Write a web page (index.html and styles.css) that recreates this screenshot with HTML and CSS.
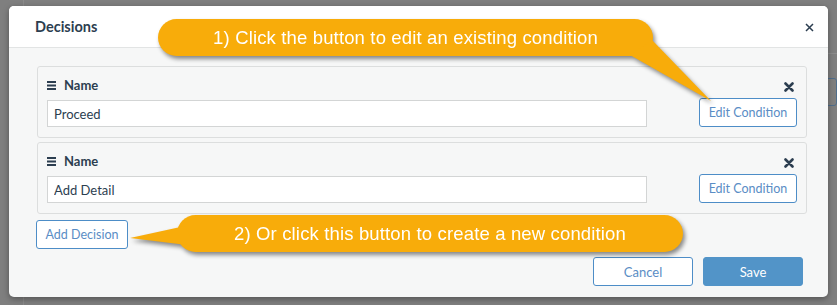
FILE: index.html
```html
<!DOCTYPE html>
<html lang="en">
<head>
<meta charset="utf-8">
<title>Decisions</title>
<link rel="stylesheet" href="styles.css">
</head>
<body>
<div class="page">
  <aside class="sidebar"></aside>
  <main class="main">
    <div class="topbar"></div>
    <div class="toolbar"><span class="ghost-btn">Save</span></div>
  </main>
</div>

<div class="modal">
  <header class="modal-header">
    <h2 class="modal-title">Decisions</h2>
    <button class="close" aria-label="Close">
      <svg width="9" height="9" viewBox="0 0 9 9"><path d="M1 1L8 8M8 1L1 8" stroke="#2c3e50" stroke-width="1.5" fill="none"/></svg>
    </button>
  </header>
  <div class="modal-body">
    <div class="decision">
      <div class="decision-main">
        <div class="decision-label">
          <svg class="grip" width="9" height="9" viewBox="0 0 9 9"><rect x="0" y="0" width="9" height="2" fill="#2c3e50"/><rect x="0" y="3.5" width="9" height="2" fill="#2c3e50"/><rect x="0" y="7" width="9" height="2" fill="#2c3e50"/></svg>
          <span>Name</span>
        </div>
        <input class="decision-input" type="text" value="Proceed">
      </div>
      <div class="decision-side">
        <span class="remove"><svg width="10" height="10" viewBox="0 0 10 10"><path d="M1.5 1.5L8.5 8.5M8.5 1.5L1.5 8.5" stroke="#2c3e50" stroke-width="2.6" stroke-linecap="round" fill="none"/></svg></span>
        <button class="btn btn-outline btn-edit">Edit Condition</button>
      </div>
    </div>
    <div class="decision">
      <div class="decision-main">
        <div class="decision-label">
          <svg class="grip" width="9" height="9" viewBox="0 0 9 9"><rect x="0" y="0" width="9" height="2" fill="#2c3e50"/><rect x="0" y="3.5" width="9" height="2" fill="#2c3e50"/><rect x="0" y="7" width="9" height="2" fill="#2c3e50"/></svg>
          <span>Name</span>
        </div>
        <input class="decision-input" type="text" value="Add Detail">
      </div>
      <div class="decision-side">
        <span class="remove"><svg width="10" height="10" viewBox="0 0 10 10"><path d="M1.5 1.5L8.5 8.5M8.5 1.5L1.5 8.5" stroke="#2c3e50" stroke-width="2.6" stroke-linecap="round" fill="none"/></svg></span>
        <button class="btn btn-outline btn-edit">Edit Condition</button>
      </div>
    </div>
    <button class="btn btn-outline btn-add">Add Decision</button>
    <div class="modal-footer">
      <button class="btn btn-outline btn-wide">Cancel</button>
      <button class="btn btn-primary btn-wide">Save</button>
    </div>
  </div>
</div>

<div class="callout callout-1">
  <svg class="tail" width="1" height="1"><polygon points="472,36 494,21 553,82" fill="#f8ac0a"/></svg>
  <span class="callout-text">1) Click the button to edit an existing condition</span>
</div>
<div class="callout callout-2">
  <svg class="tail" width="1" height="1"><polygon points="-47,23 8,11 18,31" fill="#f8ac0a"/></svg>
  <span class="callout-text">2) Or click this button to create a new condition</span>
</div>
</body>
</html>
```

FILE: styles.css
```css
* { box-sizing: border-box; }

html, body {
  margin: 0;
  width: 837px;
  height: 305px;
  overflow: hidden;
}

body {
  background: #7f7f7f;
  font-family: Lato, "Open Sans", sans-serif;
  position: relative;
}

/* dimmed page behind the dialog */
.page {
  display: flex;
  height: 305px;
}
.sidebar {
  width: 58px;
  border-right: 1px solid #8a8a8a;
}
.main {
  flex: 1;
}
.topbar {
  height: 54px;
  border-bottom: 1px solid #8c8c8c;
}
.toolbar {
  padding: 24px 0 0 760px;
  white-space: nowrap;
}
.ghost-btn {
  display: inline-block;
  height: 28px;
  line-height: 26px;
  padding: 0 12px;
  border: 1px solid #4f6e8c;
  border-radius: 3px;
  color: #5b6d80;
  font-size: 13px;
}

/* dialog */
.modal {
  position: absolute;
  left: 9px;
  top: 6px;
  width: 819px;
  height: 291px;
  background: #f6f7f7;
  border-radius: 5px;
  overflow: hidden;
  box-shadow: 0 2px 6px rgba(0, 0, 0, 0.35);
}

.modal-header {
  height: 42px;
  background: #fff;
  border-bottom: 1px solid #e2e4e4;
  display: flex;
  align-items: center;
  justify-content: space-between;
  padding: 0 14px 0 26px;
}
.modal-title {
  margin: 0;
  font-size: 14.5px;
  font-weight: 700;
  color: #2c3e50;
}
.close {
  border: 0;
  background: none;
  padding: 0;
  width: 9px;
  height: 9px;
  display: flex;
  margin-top: 2px;
}

.modal-body {
  padding: 18px 21px 0 28px;
}

.decision {
  display: flex;
  justify-content: space-between;
  border: 1px solid #dcdede;
  border-radius: 3px;
  padding: 10px 9px;
  background: #f6f7f7;
}
.decision + .decision {
  margin-top: 4px;
}
.decision-main {
  width: 600px;
}
.decision-label {
  display: flex;
  align-items: center;
  gap: 8px;
  height: 16px;
  font-size: 13px;
  font-weight: 700;
  color: #2c3e50;
}
.decision-input {
  display: block;
  width: 600px;
  height: 27px;
  margin: 7px 0 0;
  border: 1px solid #d3d5d5;
  background: #fff;
  padding: 0 6px;
  font-family: Lato, "Open Sans", sans-serif;
  font-size: 13px;
  color: #2c3e50;
  outline: none;
}

.decision-side {
  display: flex;
  flex-direction: column;
  align-items: flex-end;
  justify-content: space-between;
}
.remove {
  display: flex;
  margin: 5px 3px 0 0;
}

.btn {
  height: 29px;
  border-radius: 3px;
  font-family: Lato, "Open Sans", sans-serif;
  font-size: 12.5px;
  padding: 0;
  cursor: pointer;
}
.btn-outline {
  background: #fff;
  border: 1px solid #4d8dc7;
  color: #5a8dc5;
}
.btn-primary {
  background: #5294c8;
  border: 1px solid #5294c8;
  color: #fff;
}
.btn-edit {
  width: 98px;
}
.btn-add {
  display: block;
  width: 92px;
  margin: 6px 0 0 -1px;
}
.btn-wide {
  width: 100px;
  font-size: 13px;
}

.modal-footer {
  display: flex;
  justify-content: flex-end;
  gap: 10px;
  margin: 8px 4px 0 0;
}

/* callouts */
.callout {
  position: absolute;
  height: 37px;
  border-radius: 18.5px;
  background: #f8ac0a;
  display: flex;
  align-items: center;
  justify-content: center;
  filter: drop-shadow(2px 3px 2px rgba(0, 0, 0, 0.45));
}
.callout-1 {
  left: 158px;
  top: 19px;
  width: 495px;
}
.callout-2 {
  left: 177px;
  top: 215px;
  width: 506px;
}
.tail {
  position: absolute;
  left: 0;
  top: 0;
  overflow: visible;
}
.callout-text {
  position: relative;
  color: #fff;
  font-family: "Liberation Sans", Arial, sans-serif;
  font-size: 18.5px;
  letter-spacing: 0.15px;
  white-space: nowrap;
}
```
